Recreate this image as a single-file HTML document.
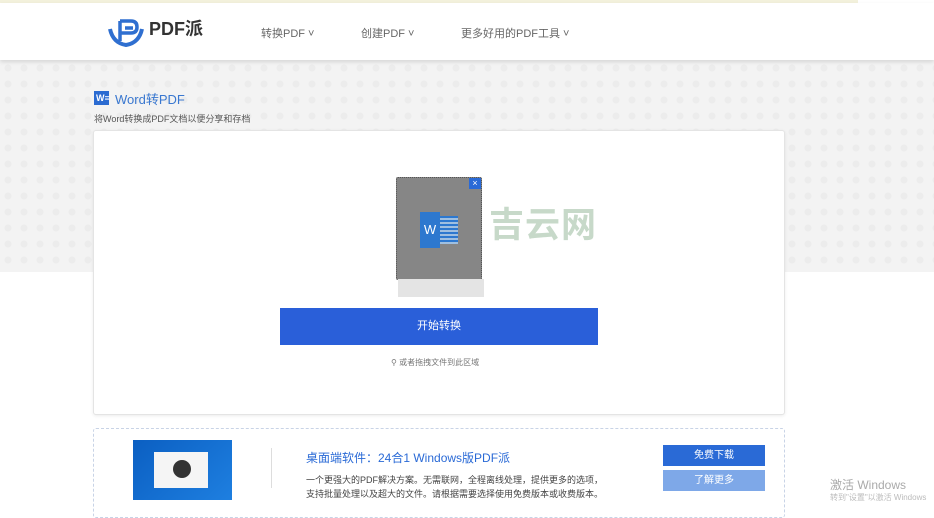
<!DOCTYPE html>
<html><head><meta charset="utf-8"><style>
*{margin:0;padding:0;box-sizing:border-box}
body{width:934px;height:500px;overflow:hidden;background:#fff;font-family:"Liberation Sans","Noto Sans CJK SC",sans-serif;position:relative}
.top{position:absolute;left:0;top:0;width:858px;height:3px;background:#f3f1dc}
.hdr{position:absolute;left:0;top:3px;width:934px;height:57px;background:#fff;box-shadow:0 2px 4px rgba(0,0,0,.12);z-index:2}
.bg{position:absolute;left:0;top:60px;width:934px;height:212px;background-color:#f3f3f3;background-image:radial-gradient(#ececec 30%,transparent 32%);background-size:16px 16px}
.nav{position:absolute;top:22px;font-size:11px;color:#666}
.card{position:absolute;left:93px;top:130px;width:692px;height:285px;background:#fff;border:1px solid #e4e4e4;border-radius:3px;box-shadow:0 1px 3px rgba(0,0,0,.08)}
.btn{position:absolute;left:280px;top:308px;width:318px;height:37px;background:#2a5fd9;color:#fff;font-size:11px;text-align:center;line-height:37px}
.bot{position:absolute;left:93px;top:428px;width:692px;height:90px;border:1px dashed #c8d3e6;border-radius:3px}
</style></head><body>
<div class="top"></div>
<div class="hdr">
<svg style="position:absolute;left:107px;top:12px" width="38" height="34" viewBox="0 0 38 34"><path d="M3 14 Q6 28 19 30 Q32 28 35 14" fill="none" stroke="#2f6fd0" stroke-width="4"/><path d="M13 6 V26 M13 6 H24 Q30 6 30 12 Q30 18 24 18 H13 M18 13 H26" fill="none" stroke="#2f6fd0" stroke-width="3.5"/></svg>
<div style="position:absolute;left:149px;top:12px;font-size:18px;font-weight:bold;color:#333">PDF派</div>
<div class="nav" style="left:261px">转换PDF ˅</div>
<div class="nav" style="left:361px">创建PDF ˅</div>
<div class="nav" style="left:461px">更多好用的PDF工具 ˅</div>
</div>
<div class="bg"></div>
<div style="position:absolute;left:94px;top:91px;width:15px;height:14px;background:#2b6bd1;color:#fff;font-size:9px;font-weight:bold;line-height:14px;padding-left:2px">W≡</div>
<div style="position:absolute;left:115px;top:89px;font-size:13px;color:#3a78d0">Word转PDF</div>
<div style="position:absolute;left:94px;top:112px;font-size:9px;color:#555">将Word转换成PDF文档以便分享和存档</div>
<div class="card"></div>
<div style="position:absolute;left:396px;top:177px;width:86px;height:103px;background:#868686;border:1px dotted #555;border-radius:2px"></div>
<div style="position:absolute;left:398px;top:279px;width:86px;height:18px;background:#e4e4e4"></div>
<div style="position:absolute;left:469px;top:178px;width:12px;height:11px;background:#2a6ad6;color:#fff;font-size:9px;line-height:11px;text-align:center">×</div>
<div style="position:absolute;left:420px;top:212px;width:20px;height:36px;background:#2d78cf;color:#fff;font-size:13px;line-height:36px;text-align:center">W</div>
<div style="position:absolute;left:440px;top:216px;width:18px;height:28px;background:repeating-linear-gradient(#2d78cf 0 2px,#9fbfe0 2px 4px)"></div>
<div style="position:absolute;left:489px;top:206px;font-size:35px;line-height:40px;color:#c7d9c9;font-weight:bold;letter-spacing:1px">吉云网</div>
<div class="btn">开始转换</div>
<div style="position:absolute;left:391px;top:357px;font-size:8px;color:#777">⚲ 或者拖拽文件到此区域</div>
<div class="bot"></div>
<div style="position:absolute;left:133px;top:440px;width:99px;height:60px;background:linear-gradient(135deg,#0b5fc2,#1e7fe0)"><div style="position:absolute;left:21px;top:12px;width:54px;height:36px;background:#f5f5f5"></div><div style="position:absolute;left:40px;top:20px;width:18px;height:18px;border-radius:50%;background:#333"></div></div>
<div style="position:absolute;left:271px;top:448px;width:1px;height:40px;background:#ddd"></div>
<div style="position:absolute;left:306px;top:449px;font-size:12px;color:#2a6ad6">桌面端软件：24合1 Windows版PDF派</div>
<div style="position:absolute;left:306px;top:473px;font-size:9px;color:#444;line-height:14px">一个更强大的PDF解决方案。无需联网，全程离线处理，提供更多的选项，<br>支持批量处理以及超大的文件。请根据需要选择使用免费版本或收费版本。</div>
<div style="position:absolute;left:663px;top:445px;width:102px;height:21px;background:#2a6ad6;color:#fff;font-size:10px;text-align:center;line-height:21px">免费下载</div>
<div style="position:absolute;left:663px;top:470px;width:102px;height:21px;background:#7ea8e8;color:#fff;font-size:10px;text-align:center;line-height:21px">了解更多</div>
<div style="position:absolute;left:830px;top:476px;font-size:12px;color:#aaa">激活 Windows</div>
<div style="position:absolute;left:830px;top:492px;font-size:8px;color:#bbb">转到"设置"以激活 Windows</div>
</body></html>
